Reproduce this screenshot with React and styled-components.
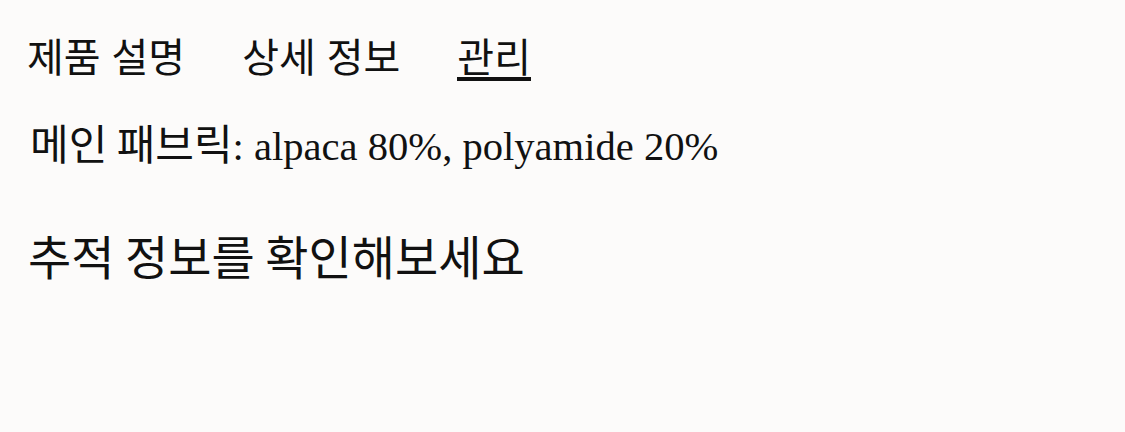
import React, { useState } from 'react';
import styled, { createGlobalStyle } from 'styled-components';

const GlobalStyle = createGlobalStyle`
  html, body {
    margin: 0;
    padding: 0;
    background: #fcfbfa;
  }
  body {
    font-family: "Noto Sans CJK KR", "Noto Sans", sans-serif;
    color: #111;
  }
`;

const Page = styled.div`
  width: 1125px;
  height: 432px;
  box-sizing: border-box;
  padding: 33px 27px 0;
  background: #fcfbfa;
`;

const Tabs = styled.nav`
  display: flex;
  gap: 57px;
`;

const Tab = styled.button`
  appearance: none;
  background: none;
  border: 0;
  padding: 0;
  margin: 0;
  font-family: "Noto Sans CJK KR", sans-serif;
  font-size: 40px;
  line-height: 44px;
  word-spacing: 2px;
  color: #111;
  cursor: pointer;
  border-bottom: 4px solid ${(p) => (p.$active ? '#111' : 'transparent')};
`;

const Fabric = styled.p`
  margin: 36px 0 0 3px;
  font-size: 40.6px;
  line-height: 50px;
  font-family: "Liberation Serif", "Noto Sans CJK KR", serif;
`;

const Korean = styled.span`
  font-family: "Noto Sans CJK KR", sans-serif;
  font-size: 42px;
`;

const Tracking = styled.p`
  margin: 55px 0 0 1px;
  font-size: 47px;
  line-height: 56px;
  font-family: "Noto Sans CJK KR", sans-serif;
`;

const tabs = ['제품 설명', '상세 정보', '관리'];

export default function App() {
  const [active, setActive] = useState(2);
  return (
    <Page>
      <GlobalStyle />
      <Tabs>
        {tabs.map((t, i) => (
          <Tab key={t} $active={i === active} onClick={() => setActive(i)}>
            {t}
          </Tab>
        ))}
      </Tabs>
      <Fabric>
        <Korean>메인 패브릭</Korean>: alpaca 80%, polyamide 20%
      </Fabric>
      <Tracking>추적 정보를 확인해보세요</Tracking>
    </Page>
  );
}
